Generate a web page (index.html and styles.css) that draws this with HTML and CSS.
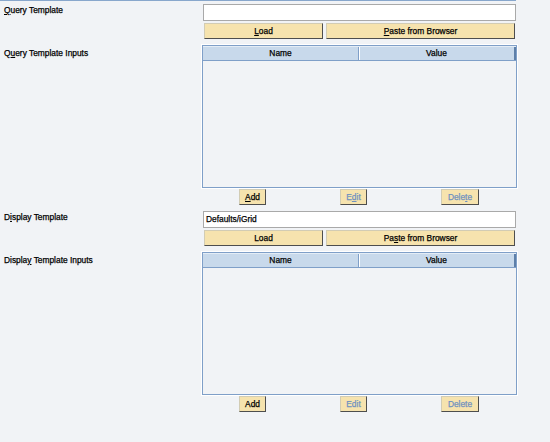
FILE: index.html
```html
<!DOCTYPE html>
<html>
<head>
<meta charset="utf-8">
<link rel="stylesheet" href="styles.css">
</head>
<body>
<div class="topline"></div>
<div class="form">
  <div class="section">
    <div class="label lbl-a"><u>Q</u>uery Template</div>
    <div class="field">
      <div class="input"></div>
      <div class="btnrow">
        <div class="btn btn-load"><u>L</u>oad</div>
        <div class="btn btn-paste"><u>P</u>aste from Browser</div>
      </div>
    </div>
    <div class="label lbl-b">Q<u>u</u>ery Template Inputs</div>
    <div class="field">
      <div class="table">
        <div class="thead">
          <div class="th th-name">Name</div>
          <div class="th th-value">Value</div>
        </div>
        <div class="tbody"></div>
      </div>
      <div class="actions">
        <div class="btn btn-add"><u>A</u>dd</div>
        <div class="btn btn-edit disabled">E<u>d</u>it</div>
        <div class="btn btn-del disabled">Dele<u>t</u>e</div>
      </div>
    </div>
  </div>
  <div class="section">
    <div class="label lbl-a">D<u>i</u>splay Template</div>
    <div class="field">
      <div class="input">Defaults/iGrid</div>
      <div class="btnrow">
        <div class="btn btn-load">Load</div>
        <div class="btn btn-paste">Pa<u>s</u>te from Browser</div>
      </div>
    </div>
    <div class="label lbl-b">Displa<u>y</u> Template Inputs</div>
    <div class="field">
      <div class="table">
        <div class="thead">
          <div class="th th-name">Name</div>
          <div class="th th-value">Value</div>
        </div>
        <div class="tbody"></div>
      </div>
      <div class="actions">
        <div class="btn btn-add">Add</div>
        <div class="btn btn-edit disabled">Edit</div>
        <div class="btn btn-del disabled">Delete</div>
      </div>
    </div>
  </div>
</div>
</body>
</html>
```
FILE: styles.css
```css
html, body {
  margin: 0;
  padding: 0;
  background: #f1f3f6;
  width: 550px;
  height: 442px;
  overflow: hidden;
  font-family: "Liberation Sans", Arial, sans-serif;
  font-size: 8.4px;
  color: #000;
  -webkit-text-stroke: 0.25px currentColor;
}
u { text-decoration: underline; text-underline-offset: 1px; }

.topline {
  width: 516px;
  height: 1px;
  background: #88a7cc;
}

.form {
  padding-top: 3px;
}

.section {
  display: grid;
  grid-template-columns: 202px 315px;
  padding-bottom: 6px;
}

.label {
  padding-left: 4px;
  line-height: 10px;
}
.lbl-a { padding-top: 1px; }
.lbl-b { padding-top: 3px; }

.field {
  display: flex;
  flex-direction: column;
}

.input {
  margin-left: 1px;
  height: 15px;
  border: 1px solid #a9a9a9;
  background: #fff;
  line-height: 15px;
  padding-left: 2px;
  box-sizing: content-box;
  width: 309px;
}

.btnrow {
  display: flex;
  gap: 3px;
  margin-top: 2px;
  margin-left: 2px;
  margin-bottom: 6px;
}

.btn {
  box-sizing: border-box;
  height: 16px;
  line-height: 14px;
  text-align: center;
  background: #f6e3ae;
  border: 1px solid;
  border-color: #d2ccb4 #4e4e4e #4e4e4e #d2ccb4;
}
.btn-load { width: 119px; }
.btn-paste { width: 189px; }

.table {
  box-sizing: border-box;
  width: 315px;
  height: 143px;
  border: 1px solid #7f9fc8;
  box-shadow: 0 0 0 1px #fff;
  display: flex;
  flex-direction: column;
}
.thead {
  display: flex;
  background: #c8d9eb;
  border-bottom: 1px solid #7f9fc8;
  border-top: 1px solid #e4edf6;
  box-sizing: border-box;
  height: 15px;
}
.th {
  text-align: center;
  line-height: 13px;
}
.th-name {
  width: 155px;
  border-right: 1px solid #7f9fc8;
  box-shadow: 1px 0 0 #fff;
}
.th-value {
  flex: 1;
  border-right: 2px solid #5d7fa9;
}
.tbody {
  flex: 1;
}

.actions {
  display: flex;
  gap: 74px;
  padding-left: 37px;
  margin-top: 1px;
}
.btn-add { width: 27px; }
.btn-edit { width: 27px; }
.btn-del { width: 38px; }
.disabled { color: #6f91c0; }
```
